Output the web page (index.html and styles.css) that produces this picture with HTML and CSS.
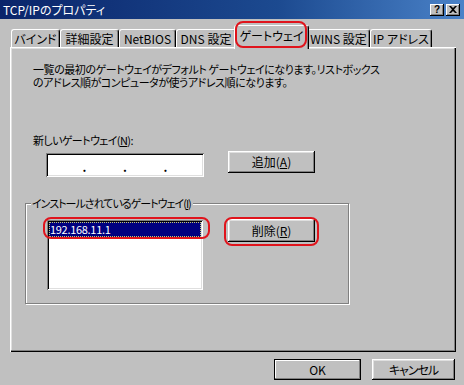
FILE: index.html
```
<!DOCTYPE html>
<html>
<head>
<meta charset="utf-8">
<link rel="stylesheet" href="styles.css">
</head>
<body>
<div class="dialog">
    <div class="titlebar">
        <span class="title">TCP/IPのプロパティ</span>
        <div class="caption-btns">
            <span class="cbtn">?</span>
            <span class="cbtn close">
                <svg width="8" height="7" viewBox="0 0 8 7"><path d="M0 0h2l2 2 2-2h2L5 3.5 8 7H6L4 5 2 7H0l3-3.5z" fill="#000"/></svg>
            </span>
        </div>
    </div>

    <div class="tabs">
        <div class="tab t1">バインド</div>
        <div class="tab t2">詳細設定</div>
        <div class="tab t3">NetBIOS</div>
        <div class="tab t4">DNS 設定</div>
        <div class="tab t5 active">ゲートウェイ</div>
        <div class="tab t6">WINS 設定</div>
        <div class="tab t7">IP アドレス</div>
    </div>

    <div class="panel">
        <p class="desc">一覧の最初のゲートウェイがデフォルト ゲートウェイになります。リストボックス<br>のアドレス順がコンピュータが使うアドレス順になります。</p>
        <div class="label">新しいゲートウェイ(<u>N</u>):</div>
        <div class="row">
            <div class="ipbox"><span>.</span><span>.</span><span>.</span></div>
            <button class="btn add">追加(<u>A</u>)</button>
        </div>

        <div class="group">
            <span class="legend">インストールされているゲートウェイ(<u>I</u>)</span>
            <div class="group-row">
                <div class="listbox">
                    <div class="item selected">192.168.11.1</div>
                </div>
                <button class="btn remove">削除(<u>R</u>)</button>
            </div>
        </div>
    </div>

    <div class="footer">
        <button class="btn ok">OK</button>
        <button class="btn cancel">キャンセル</button>
    </div>

    <div class="mark mark-tab"></div>
    <div class="mark mark-item"></div>
    <div class="mark mark-remove"></div>
</div>
</body>
</html>
```

FILE: styles.css
```
* {
    margin: 0;
    padding: 0;
    box-sizing: border-box;
}

body {
    background: #c0c0c0;
}

.dialog {
    position: relative;
    width: 464px;
    height: 385px;
    overflow: hidden;
    background: #c0c0c0;
    color: #000;
    font-family: "MS UI Gothic", "Noto Sans CJK JP", sans-serif;
    font-size: 12px;
    font-feature-settings: "palt";
}

u {
    text-decoration-thickness: 1px;
    text-underline-offset: 1px;
}

.titlebar {
    height: 19px;
    display: flex;
    align-items: center;
    padding: 0 4px 0 3px;
    background: linear-gradient(90deg, #0a246a 0%, #1c4a90 60%, #4a82c8 100%);
    color: #fff;
}

.title {
    line-height: 14px;
}

.caption-btns {
    margin-left: auto;
    display: flex;
    gap: 2px;
}

.cbtn {
    width: 14px;
    height: 12px;
    display: flex;
    align-items: center;
    justify-content: center;
    background: #c0c0c0;
    color: #000;
    font-family: "Liberation Sans", sans-serif;
    font-size: 10px;
    font-weight: bold;
    box-shadow: inset -1px -1px #000, inset 1px 1px #fff, inset -2px -2px #808080;
}

.tabs {
    position: relative;
    z-index: 2;
    height: 28px;
    display: flex;
    align-items: flex-end;
    padding-left: 11px;
}

.tab {
    height: 18px;
    display: flex;
    align-items: center;
    justify-content: center;
    background: #c0c0c0;
    border-top: 1px solid #fff;
    border-left: 1px solid #fff;
    border-right: 1px solid #000;
    border-radius: 3px 3px 0 0;
    box-shadow: inset -1px 0 #808080;
    line-height: 14px;
    padding-top: 1px;
}

.t1 { width: 49px; }
.t2 { width: 59px; }
.t3 { width: 57px; }
.t4 { width: 60px; }
.t5 { width: 71px; }
.t6 { width: 63px; }
.t7 { width: 62px; }

.tab.active {
    position: relative;
    z-index: 3;
    height: 24px;
    width: 75px;
    margin: 0 -2px -2px;
    padding-bottom: 4px;
}

.panel {
    position: relative;
    z-index: 1;
    height: 305px;
    margin: 0 8px 0 10px;
    padding: 16px 0 0 23px;
    box-shadow: inset 1px 1px #fff, inset -1px -1px #000, inset -2px -2px #808080, inset 2px 2px #dfdfdf;
}

.desc {
    font-size: 11px;
    letter-spacing: -0.45px;
    line-height: 13px;
}

.label {
    margin-top: 45px;
    font-size: 11px;
    letter-spacing: -0.6px;
    line-height: 12px;
}

.row {
    display: flex;
    align-items: flex-start;
    margin-top: 5px;
}

.ipbox {
    width: 158px;
    height: 24px;
    margin: 2px 0 0 13px;
    display: flex;
    justify-content: space-evenly;
    align-items: center;
    padding-top: 2px;
    background: #fff;
    box-shadow: inset 1px 1px #808080, inset -1px -1px #fff, inset 2px 2px #000, inset -2px -2px #dfdfdf;
    font-weight: bold;
}

.btn {
    display: flex;
    align-items: center;
    justify-content: center;
    border: none;
    background: #c0c0c0;
    color: #000;
    font: inherit;
    line-height: 14px;
    box-shadow: inset -1px -1px #000, inset 1px 1px #fff, inset -2px -2px #808080, inset 2px 2px #dfdfdf;
}

.add {
    width: 87px;
    height: 22px;
    margin-left: 24px;
}

.group {
    position: relative;
    width: 324px;
    height: 101px;
    margin: 26px 0 0 -8px;
    padding: 16px 0 0 21px;
    border: 1px solid #808080;
    box-shadow: inset 1px 1px #fff, 1px 1px #fff;
}

.legend {
    position: absolute;
    top: -7px;
    left: 5px;
    padding: 0 2px 0 1px;
    font-size: 11px;
    letter-spacing: -1px;
    line-height: 13px;
    background: #c0c0c0;
}

.group-row {
    display: flex;
    align-items: flex-start;
}

.listbox {
    width: 156px;
    height: 70px;
    padding: 2px;
    background: #fff;
    box-shadow: inset 1px 1px #808080, inset -1px -1px #fff, inset 2px 2px #000, inset -2px -2px #dfdfdf;
}

.item {
    height: 15px;
    padding-left: 1px;
    font-size: 11px;
    letter-spacing: -0.3px;
    line-height: 15px;
}

.item.selected {
    background: #000080;
    color: #fff;
    outline: 1px dotted #c8c870;
    outline-offset: -1px;
}

.remove {
    width: 87px;
    height: 23px;
    margin: -1px 0 0 25px;
}

.footer {
    display: flex;
    justify-content: flex-end;
    gap: 11px;
    margin-top: 7px;
    padding-right: 9px;
}

.ok {
    width: 87px;
    height: 21px;
    box-shadow: inset 0 0 0 1px #000, inset -2px -2px #808080, inset 2px 2px #fff;
}

.cancel {
    width: 83px;
    height: 21px;
    letter-spacing: -1px;
}

/* red annotation marks */
.mark {
    position: absolute;
    z-index: 5;
    border: 2px solid #e0141c;
    border-radius: 8px;
}

.mark-tab {
    left: 235px;
    top: 21px;
    width: 72px;
    height: 27px;
}

.mark-item {
    left: 43px;
    top: 217px;
    width: 167px;
    height: 22px;
}

.mark-remove {
    left: 224px;
    top: 217px;
    width: 95px;
    height: 29px;
}
```
